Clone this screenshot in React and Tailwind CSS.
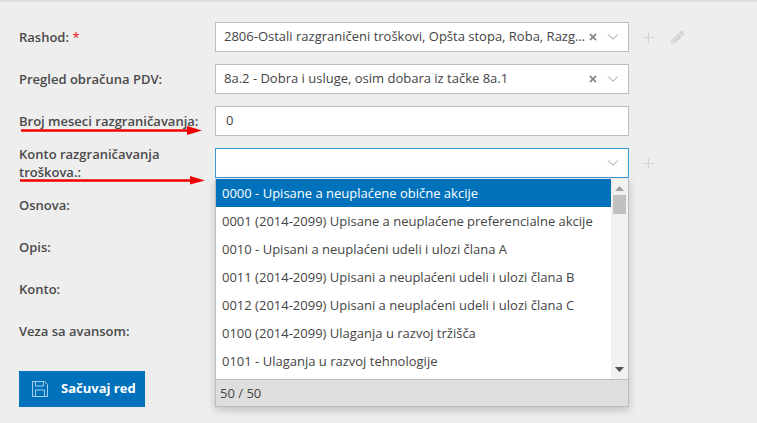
import { ChevronDown, Plus } from "lucide-react";
import { FaPencilAlt, FaTimes } from "react-icons/fa";

const OPTIONS = [
  "0000 - Upisane a neuplaćene obične akcije",
  "0001 (2014-2099) Upisane a neuplaćene preferencialne akcije",
  "0010 - Upisani a neuplaćeni udeli i ulozi člana A",
  "0011 (2014-2099) Upisani a neuplaćeni udeli i ulozi člana B",
  "0012 (2014-2099) Upisani a neuplaćeni udeli i ulozi člana C",
  "0100 (2014-2099) Ulaganja u razvoj tržišča",
  "0101 - Ulaganja u razvoj tehnologije",
];

function Row({ label, children, star }) {
  return (
    <div className="flex items-center h-[30px]">
      <label className="w-[196px] shrink-0 leading-[18px] text-[#4a4a4a] font-semibold">
        {label}
        {star && <span className="text-[#e53935]"> *</span>}
      </label>
      {children}
    </div>
  );
}

function Select({ text, clear, focus }) {
  return (
    <div
      className={`w-[414px] h-[30px] shrink-0 flex items-center bg-white border pl-[8px] pr-[6px] ${
        focus ? "border-[#3d9ad6]" : "border-[#bdbdbd]"
      }`}
    >
      <span className="flex-1 whitespace-nowrap text-[#444]">{text}</span>
      {clear && <FaTimes size={10} className="text-[#888] shrink-0 mr-[6px]" />}
      <ChevronDown size={18} strokeWidth={1} className="text-[#777] shrink-0" />
    </div>
  );
}

function SaveIcon() {
  return (
    <svg width="16" height="16" viewBox="0 0 16 16" fill="none" stroke="#a5cfe9" strokeWidth="1" className="shrink-0">
      <path d="M.5.5h12l3 3v12H.5z" />
      <path d="M3.5.5v4.5h8V.5M3.5 15.5V9h9v6.5" />
    </svg>
  );
}

function Dropdown() {
  return (
    <div className="absolute left-[215px] top-[177px] w-[414px] h-[228px] flex flex-col bg-white border-x border-b border-[#bdbdbd] shadow-[0_3px_8px_rgba(0,0,0,0.2)]">
      <div className="flex flex-1 min-h-0">
        <ul className="flex-1 min-w-0">
          {OPTIONS.map((o, i) => (
            <li
              key={o}
              className={`h-[28px] leading-[28px] pl-[6px] whitespace-nowrap ${
                i === 0 ? "bg-[#0072bc] text-white" : "text-[#444]"
              }`}
            >
              {o}
            </li>
          ))}
        </ul>
        {/* scrollbar */}
        <div className="w-[17px] bg-[#f1f1f1] flex flex-col items-center">
          <svg width="9" height="5" viewBox="0 0 9 5" className="mt-[7px]">
            <path d="M4.5 0 9 5H0z" fill="#a3a3a3" />
          </svg>
          <div className="w-[13px] h-[19px] bg-[#c1c1c1] mt-[4px]" />
          <svg width="9" height="5" viewBox="0 0 9 5" className="mt-auto mb-[7px]">
            <path d="M0 0h9L4.5 5z" fill="#505050" />
          </svg>
        </div>
      </div>
      <div className="h-[27px] shrink-0 bg-[#dedede] border-t border-[#bdbdbd] pl-[4px] leading-[26px] text-[#444]">
        50 / 50
      </div>
    </div>
  );
}

export default function App() {
  return (
    <div
      className="relative w-[757px] h-[423px] overflow-hidden bg-[#eeeeee] border-t-2 border-[#dcdcdc] text-[13px]"
      style={{ fontFamily: '"Open Sans", sans-serif' }}
    >
      <div className="pl-[19px] pt-[20px] flex flex-col gap-[12px]">
        <Row label="Rashod:" star>
          <Select text="2806-Ostali razgraničeni troškovi, Opšta stopa, Roba, Razg…" clear />
          <Plus size={17} strokeWidth={1.5} className="text-[#d2d2d2] ml-[11px]" />
          <FaPencilAlt size={13} className="text-[#d2d2d2] ml-[14px]" />
        </Row>
        <Row label="Pregled obračuna PDV:">
          <Select text="8a.2 - Dobra i usluge, osim dobara iz tačke 8a.1" clear />
        </Row>
        <Row label="Broj meseci razgraničavanja:">
          <div className="w-[414px] h-[30px] shrink-0 flex items-center bg-white border border-[#bdbdbd] pl-[10px] text-[#444]">
            0
          </div>
        </Row>
        <Row label="Konto razgraničavanja troškova.:">
          <Select text="" focus />
          <Plus size={17} strokeWidth={1.5} className="text-[#d2d2d2] ml-[11px]" />
        </Row>
        <Row label="Osnova:" />
        <Row label="Opis:" />
        <Row label="Konto:" />
        <Row label="Veza sa avansom:" />
        <button className="mt-[13px] w-[126px] h-[36px] bg-[#0072bc] text-white font-bold flex items-center pl-[13px] gap-[13px]">
          <SaveIcon />
          Sačuvaj red
        </button>
      </div>
      <Dropdown />

      {/* red annotation arrows */}
      <svg width="757" height="423" className="absolute left-0 top-[-2px] pointer-events-none">
        <path d="M21 130.5H190" stroke="#f00000" strokeWidth="2.5" />
        <path d="M187 126 202 130.5 187 135z" fill="#f00000" />
        <path d="M20 180.5H193" stroke="#f00000" strokeWidth="2.5" />
        <path d="M190 176 205 180.5 190 184.5z" fill="#f00000" />
      </svg>
    </div>
  );
}
